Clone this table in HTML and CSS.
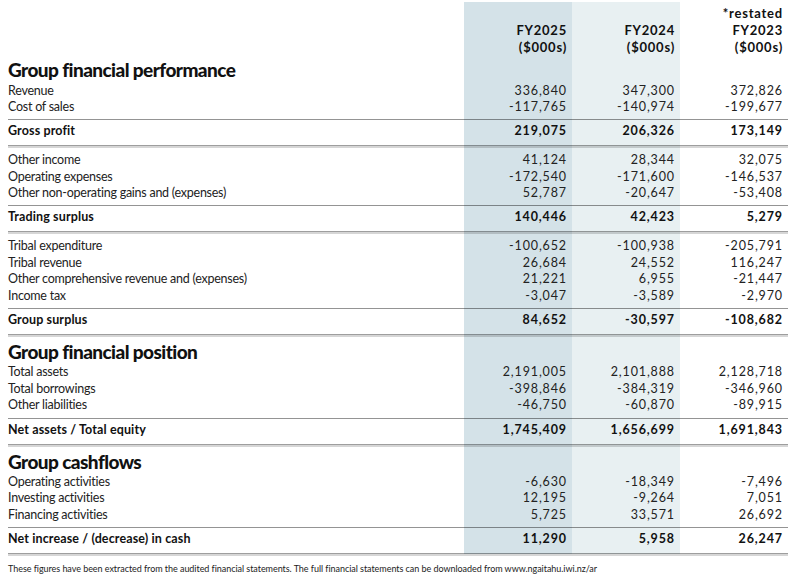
FILE: index.html
```html
<!DOCTYPE html>
<html lang="en">
<head>
<meta charset="utf-8">
<title>Group financial summary</title>
<link rel="stylesheet" href="styles.css">
</head>
<body>
<div class="page">
  <div class="report">
    <div class="row head">
      <div class="label"></div>
      <div class="num">FY2025<br>($000s)</div>
      <div class="num">FY2024<br>($000s)</div>
      <div class="num">*restated<br>FY2023<br>($000s)</div>
    </div>

    <h2 class="section first">Group financial performance</h2>
    <div class="group">
      <div class="row"><span class="label">Revenue</span><span class="num">336,840</span><span class="num">347,300</span><span class="num">372,826</span></div>
      <div class="row"><span class="label">Cost of sales</span><span class="num">-117,765</span><span class="num">-140,974</span><span class="num">-199,677</span></div>
    </div>
    <div class="row total"><span class="label">Gross profit</span><span class="num">219,075</span><span class="num">206,326</span><span class="num">173,149</span></div>

    <div class="group after">
      <div class="row"><span class="label">Other income</span><span class="num">41,124</span><span class="num">28,344</span><span class="num">32,075</span></div>
      <div class="row"><span class="label">Operating expenses</span><span class="num">-172,540</span><span class="num">-171,600</span><span class="num">-146,537</span></div>
      <div class="row"><span class="label">Other non-operating gains and (expenses)</span><span class="num">52,787</span><span class="num">-20,647</span><span class="num">-53,408</span></div>
    </div>
    <div class="row total"><span class="label">Trading surplus</span><span class="num">140,446</span><span class="num">42,423</span><span class="num">5,279</span></div>

    <div class="group after">
      <div class="row"><span class="label">Tribal expenditure</span><span class="num">-100,652</span><span class="num">-100,938</span><span class="num">-205,791</span></div>
      <div class="row"><span class="label">Tribal revenue</span><span class="num">26,684</span><span class="num">24,552</span><span class="num">116,247</span></div>
      <div class="row"><span class="label">Other comprehensive revenue and (expenses)</span><span class="num">21,221</span><span class="num">6,955</span><span class="num">-21,447</span></div>
      <div class="row"><span class="label">Income tax</span><span class="num">-3,047</span><span class="num">-3,589</span><span class="num">-2,970</span></div>
    </div>
    <div class="row total"><span class="label">Group surplus</span><span class="num">84,652</span><span class="num">-30,597</span><span class="num">-108,682</span></div>

    <h2 class="section">Group financial position</h2>
    <div class="group">
      <div class="row"><span class="label">Total assets</span><span class="num">2,191,005</span><span class="num">2,101,888</span><span class="num">2,128,718</span></div>
      <div class="row"><span class="label">Total borrowings</span><span class="num">-398,846</span><span class="num">-384,319</span><span class="num">-346,960</span></div>
      <div class="row"><span class="label">Other liabilities</span><span class="num">-46,750</span><span class="num">-60,870</span><span class="num">-89,915</span></div>
    </div>
    <div class="row total"><span class="label">Net assets / Total equity</span><span class="num">1,745,409</span><span class="num">1,656,699</span><span class="num">1,691,843</span></div>

    <h2 class="section">Group cashflows</h2>
    <div class="group">
      <div class="row"><span class="label">Operating activities</span><span class="num">-6,630</span><span class="num">-18,349</span><span class="num">-7,496</span></div>
      <div class="row"><span class="label">Investing activities</span><span class="num">12,195</span><span class="num">-9,264</span><span class="num">7,051</span></div>
      <div class="row"><span class="label">Financing activities</span><span class="num">5,725</span><span class="num">33,571</span><span class="num">26,692</span></div>
    </div>
    <div class="row total last"><span class="label">Net increase / (decrease) in cash</span><span class="num">11,290</span><span class="num">5,958</span><span class="num">26,247</span></div>
  </div>
  <p class="note">These figures have been extracted from the audited financial statements. The full financial statements can be downloaded from www.ngaitahu.iwi.nz/ar</p>
</div>
</body>
</html>
```

FILE: styles.css
```css
html, body {
  margin: 0;
  padding: 0;
  background: #ffffff;
}

body {
  font-family: "Lato", "Open Sans", sans-serif;
  color: #222222;
}

.page {
  padding: 2px 0 0 8px;
  width: 780px;
}

.report {
  width: 780px;
  background: linear-gradient(to right,
    transparent 0, transparent 456px,
    #d4e2e8 456px, #d4e2e8 564px,
    #e8f0f2 564px, #e8f0f2 672px,
    transparent 672px);
}

.row {
  display: grid;
  grid-template-columns: 456px 108px 108px 108px;
  font-size: 12.5px;
  line-height: 16.4px;
  letter-spacing: -0.02em;
}

.num {
  text-align: right;
  padding-right: 5px;
  letter-spacing: 0.07em;
}

.head {
  font-size: 13px;
  font-weight: 700;
  line-height: 17px;
  padding-top: 3px;
  color: #111111;
  align-items: end;
}

.head .num {
  letter-spacing: 0.06em;
}

.section {
  margin: 6px 0 1.5px 0;
  font-size: 19px;
  line-height: 22px;
  font-weight: 900;
  letter-spacing: -0.03em;
  color: #111111;
}

.section.first {
  margin-top: 3px;
}

.group {
  padding-bottom: 4px;
  border-bottom: 1px solid rgba(0, 0, 0, 0.42);
}

.group.after {
  padding-top: 4px;
}

.total {
  font-weight: 700;
  color: #111111;
  padding: 3px 0 5.5px;
  border-bottom: 1px solid rgba(0, 0, 0, 0.38);
  box-shadow: 0 2px 0 rgba(0, 0, 0, 0.16);
  margin-bottom: 2px;
}

.total .label {
  letter-spacing: 0.01em;
}

.note {
  margin: 9px 0 0 0;
  font-size: 9px;
  line-height: 12px;
  letter-spacing: -0.005em;
  color: #222222;
}
```
